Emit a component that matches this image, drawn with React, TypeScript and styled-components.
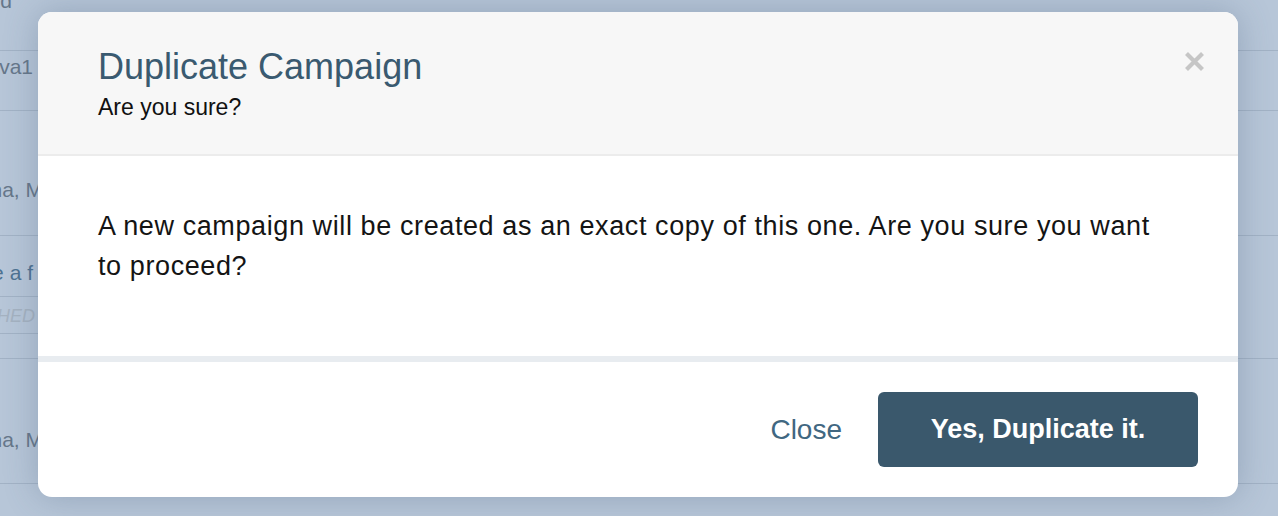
import styled, { createGlobalStyle } from 'styled-components'

const GlobalStyle = createGlobalStyle`
  html, body {
    margin: 0;
    padding: 0;
  }
  body {
    font-family: "Liberation Sans", Arial, sans-serif;
  }
`

const App: React.FunctionComponent = () => {
  return (
    <Page>
      <GlobalStyle />
      <Backdrop>
        <Row $h={50}>
          <Cell $top={-11}>
            <Faded $end={12}>Untitled</Faded>
          </Cell>
        </Row>
        <Row $h={59}>
          <Cell $top={4}>
            <Faded $end={33}>Nova1</Faded>
          </Cell>
        </Row>
        <Row $h={124}>
          <Cell $top={67}>
            <Faded $end={43}>Lena, M</Faded>
          </Cell>
        </Row>
        <Row $h={122}>
          <SubRow $h={60}>
            <Cell $top={25}>
              <LinkText>Share a f</LinkText>
            </Cell>
          </SubRow>
          <SubRow $h={36}>
            <Cell $top={8}>
              <Status>PUBLISHED</Status>
            </Cell>
          </SubRow>
        </Row>
        <Row $h={124}>
          <Cell $top={69}>
            <Faded $end={43}>Lena, M</Faded>
          </Cell>
        </Row>
        <Row $h={40} />
      </Backdrop>

      <Modal>
        <Header>
          <HeaderText>
            <Title>Duplicate Campaign</Title>
            <Subtitle>Are you sure?</Subtitle>
          </HeaderText>
          <CloseIcon aria-label="Close">
            <svg width="21" height="21" viewBox="0 0 21 21">
              <path d="M2.5 2.5 L18.5 18.5 M18.5 2.5 L2.5 18.5" stroke="#c6c6c6" strokeWidth="4.2" />
            </svg>
          </CloseIcon>
        </Header>
        <Body>
          <Message>
            A new campaign will be created as an exact copy of this one. Are you sure you want to proceed?
          </Message>
        </Body>
        <Footer>
          <TextButton>Close</TextButton>
          <PrimaryButton>Yes, Duplicate it.</PrimaryButton>
        </Footer>
      </Modal>
    </Page>
  )
}

const Page = styled.div`
  position: relative;
  width: 1278px;
  height: 516px;
  overflow: hidden;
  background: #b7c6d8;
`

const Backdrop = styled.div`
  display: flex;
  flex-direction: column;
`

const Row = styled.div<{ $h: number }>`
  height: ${(p) => p.$h}px;
  flex-shrink: 0;
  border-bottom: 1px solid #a2b2c5;
  display: flex;
  flex-direction: column;
`

const SubRow = styled.div<{ $h: number }>`
  height: ${(p) => p.$h}px;
  flex-shrink: 0;
  border-bottom: 1px solid #a2b2c5;
  width: 60px;
  display: flex;
`

const Cell = styled.div<{ $top: number }>`
  width: 60px;
  height: 100%;
  padding-top: ${(p) => Math.max(p.$top, 0)}px;
  box-sizing: border-box;
  display: flex;
  flex-direction: column;
  align-items: flex-end;
  overflow: hidden;

  & > * {
    margin-top: ${(p) => Math.min(p.$top, 0)}px;
  }
`

const Faded = styled.div<{ $end: number }>`
  margin-right: ${(p) => 60 - p.$end}px;
  white-space: nowrap;
  font-size: 21px;
  line-height: 24px;
  color: #66778a;
`

const LinkText = styled.div`
  margin-right: 27px;
  white-space: nowrap;
  font-size: 21px;
  line-height: 24px;
  color: #4e7292;
`

const Status = styled.div`
  margin-right: 25px;
  white-space: nowrap;
  font-size: 18px;
  line-height: 22px;
  font-style: italic;
  color: #a5b2c1;
`

const Modal = styled.div`
  position: absolute;
  left: 38px;
  top: 12px;
  width: 1200px;
  height: 485px;
  display: flex;
  flex-direction: column;
  background: #ffffff;
  border-radius: 14px;
  overflow: hidden;
  box-shadow: 0 0 34px rgba(72, 92, 122, 0.32);
`

const Header = styled.div`
  height: 144px;
  flex-shrink: 0;
  box-sizing: border-box;
  padding: 35px 33px 0 60px;
  display: flex;
  justify-content: space-between;
  align-items: flex-start;
  background: #f7f7f7;
  border-bottom: 2px solid #ececec;
`

const HeaderText = styled.div`
  display: flex;
  flex-direction: column;
  gap: 6px;
`

const Title = styled.h2`
  margin: 0;
  font-size: 36px;
  line-height: 40px;
  font-weight: normal;
  color: #3a5a70;
`

const Subtitle = styled.div`
  font-size: 23px;
  line-height: 28px;
  color: #111111;
`

const CloseIcon = styled.button`
  margin-top: 4px;
  padding: 0;
  border: none;
  background: none;
  display: flex;
  cursor: pointer;
`

const Body = styled.div`
  height: 206px;
  flex-shrink: 0;
  box-sizing: border-box;
  padding: 50px 60px 0 60px;
  border-bottom: 6px solid #e8ecf0;
`

const Message = styled.p`
  margin: 0;
  max-width: 1080px;
  font-size: 27px;
  line-height: 40px;
  letter-spacing: 0.6px;
  color: #141414;
`

const Footer = styled.div`
  flex: 1;
  display: flex;
  align-items: center;
  justify-content: flex-end;
  gap: 36px;
  padding-right: 40px;
`

const TextButton = styled.button`
  padding: 0;
  border: none;
  background: none;
  font-family: "Liberation Sans", Arial, sans-serif;
  font-size: 28px;
  color: #416781;
  cursor: pointer;
`

const PrimaryButton = styled.button`
  width: 320px;
  height: 75px;
  border: none;
  border-radius: 6px;
  background: #3a586c;
  color: #ffffff;
  font-family: "Liberation Sans", Arial, sans-serif;
  font-size: 27px;
  font-weight: bold;
  cursor: pointer;
`

export default App
